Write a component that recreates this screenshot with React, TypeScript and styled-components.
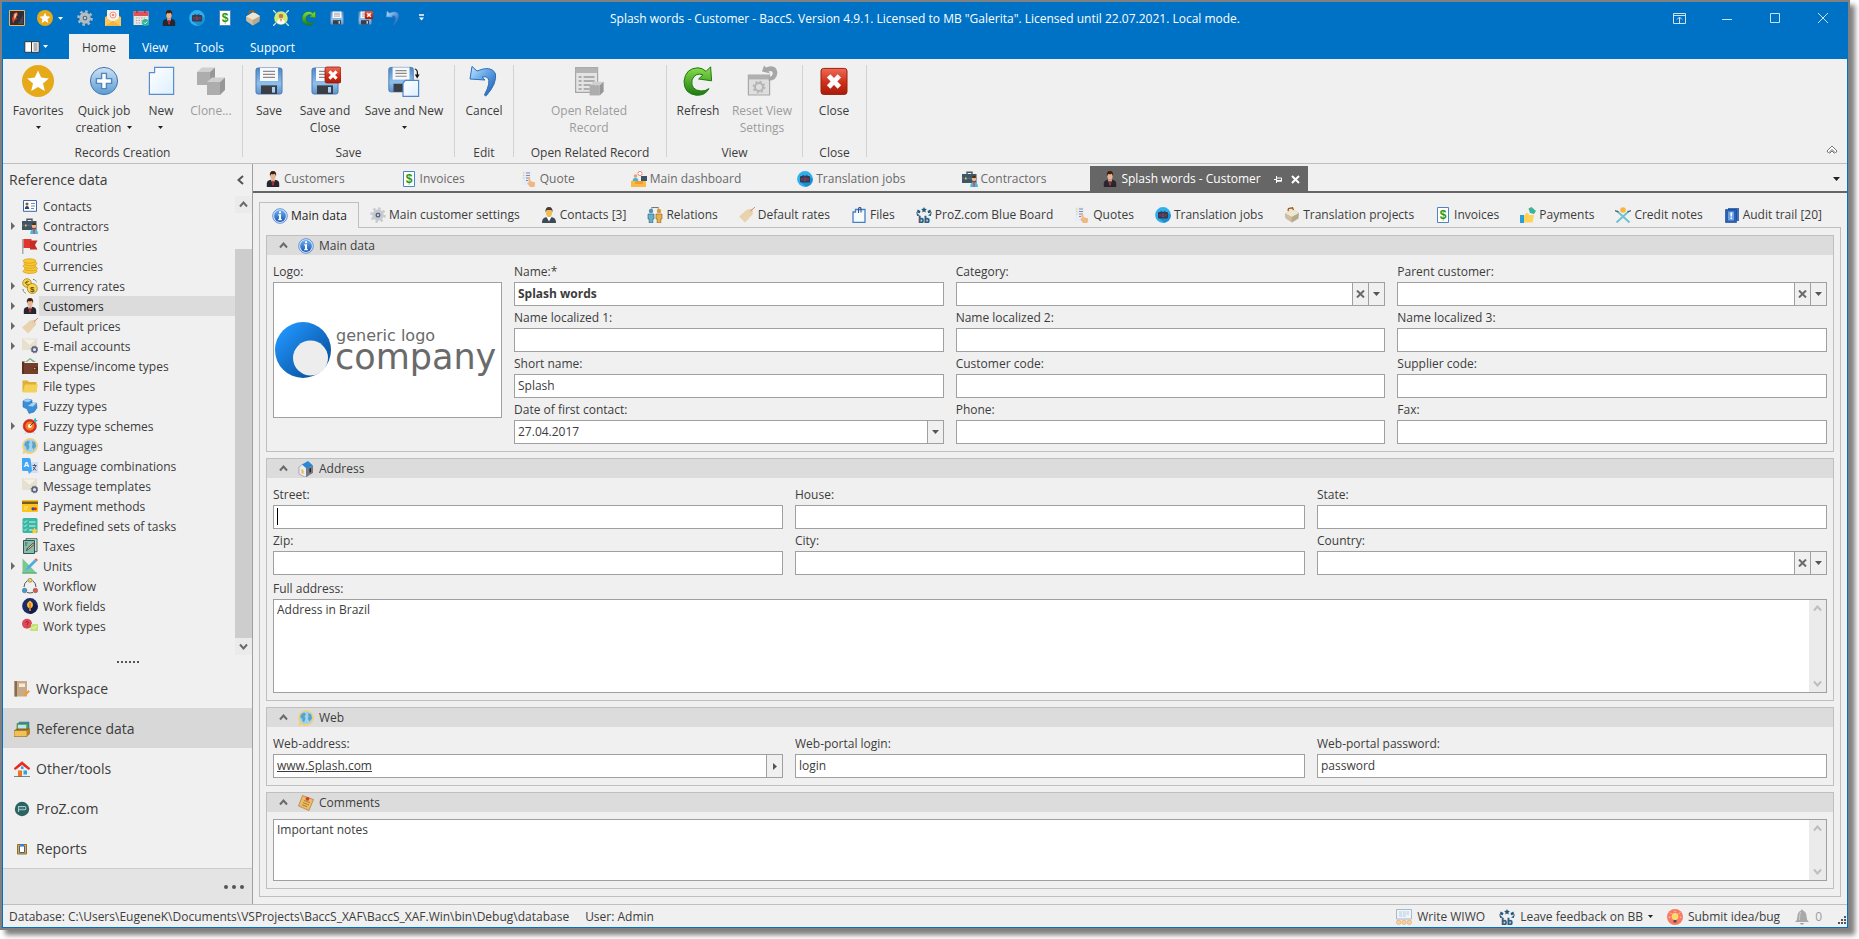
import React, { useState } from 'react';
import styled, { createGlobalStyle, css } from 'styled-components';

const color = {
  accent: '#0072c6',
  face: '#f0f0f0',
  line: '#bfbfbf',
  fieldLine: '#a0a0a0',
  text: '#3c3c3c',
  muted: '#9c9c9c',
  selected: '#dcdcdc',
  dark: '#666666',
};

const GlobalStyle = createGlobalStyle`
  *, *::before, *::after { box-sizing: border-box; }
  body {
    margin: 0;
    background: #ffffff;
    color: ${color.text};
    font: 12px/16px "Open Sans", "Noto Sans", sans-serif;
  }
  button, input, select, textarea { font: inherit; color: inherit; }
  button { background: none; border: 0; padding: 0; margin: 0; }
  ul { list-style: none; margin: 0; padding: 0; }
`;

/* ---------- icons ---------- */

const Gradients = styled.svg`
  position: absolute;
  width: 0;
  height: 0;
`;

const IconDefs = () => (
  <Gradients aria-hidden="true">
    <defs>
      <linearGradient id="gDisk" x1="0" y1="0" x2="0" y2="1">
        <stop offset="0" stopColor="#4d86c4" /><stop offset=".6" stopColor="#8fc0ea" /><stop offset="1" stopColor="#5c94cf" />
      </linearGradient>
      <linearGradient id="gBlue" x1="0" y1="0" x2="1" y2="1">
        <stop offset="0" stopColor="#c4e4ff" /><stop offset=".4" stopColor="#6cabe8" /><stop offset="1" stopColor="#1656ad" />
      </linearGradient>
      <linearGradient id="gPlus" x1="0" y1="0" x2="0" y2="1">
        <stop offset="0" stopColor="#cfe2f3" /><stop offset="1" stopColor="#5a9bd0" />
      </linearGradient>
      <linearGradient id="gPage" x1="0" y1="0" x2="1" y2="1">
        <stop offset="0" stopColor="#ffffff" /><stop offset="1" stopColor="#dcefff" />
      </linearGradient>
      <linearGradient id="gGreen" x1="0" y1="0" x2="0" y2="1">
        <stop offset="0" stopColor="#8be04a" /><stop offset="1" stopColor="#1d7a12" />
      </linearGradient>
      <linearGradient id="gRed" x1="0" y1="0" x2="0" y2="1">
        <stop offset="0" stopColor="#ee6a55" /><stop offset=".55" stopColor="#d02e18" /><stop offset="1" stopColor="#a81c0a" />
      </linearGradient>
      <linearGradient id="gInfo" x1="0" y1="0" x2="0" y2="1">
        <stop offset="0" stopColor="#6ab0f0" /><stop offset="1" stopColor="#1a55b4" />
      </linearGradient>
      <linearGradient id="gLogo" x1="0" y1="0" x2="1" y2="1">
        <stop offset=".1" stopColor="#2196ff" /><stop offset=".85" stopColor="#08529e" />
      </linearGradient>
    </defs>
  </Gradients>
);

const disk = (
  <>
    <path d="M1.500 2.500q0-1 1-1h11q1 0 1 1v11q0 1-1 1h-11q-1 0-1-1z" fill="url(#gDisk)" stroke="#4a7cb5" strokeWidth=".5" />
    <path d="M3.500 1.500h9V8h-9z" fill="#f6f8fb" />
    <path d="M5 3.200h6M5 4.700h6M5 6.200h6" stroke="#8a8a8a" strokeWidth=".6" />
    <path d="M4 10.200h8v4.300H4z" fill="#3b3f45" />
    <path d="M9.500 11h1.500v2.800H9.500z" fill="#a9d0f5" />
  </>
);

const personHead = (
  <>
    <ellipse cx="8" cy="5" rx="2.700" ry="3.500" fill="#e9b48c" />
    <path d="M5 5.500Q4 0 8 0t3 5.500q-.5-2-1.200-2.700Q8 3.800 6.200 3 5.300 4 5 5.500z" fill="#3d2010" />
  </>
);

const globe = (
  <>
    <path d="M8 0a8 8 0 1 1-4 15L.5 16 1.300 12A8 8 0 0 1 8 0z" fill="#f3cf7e" />
    <circle cx="8" cy="7.800" r="6.300" fill="#9cd3ef" />
    <path d="M3 4.500 6 2.500 8 4 6.500 6.500l1 2-1.500 4Q4 11.500 4.300 9L2.200 7zM10 3l3.200 1.500.8 4-2.500 3L10 9l.5-2.500z" fill="#5ba3c6" />
  </>
);

const mailGear = (
  <>
    <path d="M0 1h15v11H0z" fill="#e6e0d0" />
    <path d="M0 1h15L7.500 7.500z" fill="#f4f0e4" stroke="#d8d1bf" strokeWidth=".5" />
    <circle cx="12.500" cy="11.500" r="2.400" fill="none" stroke="#5c6485" strokeWidth="1.600" />
    <circle cx="12.500" cy="11.500" r="3.400" fill="none" stroke="#5c6485" strokeWidth=".9" strokeDasharray="1.300 1.370" />
  </>
);

const gear = (body: string, hub: string) => (
  <>
    <circle cx="8" cy="8" r="6.600" fill="none" stroke={body} strokeWidth="2.400" strokeDasharray="2.500 2.680" />
    <circle cx="8" cy="8" r="4.200" fill="#e6eaee" stroke={body} strokeWidth="3" />
    <circle cx="8" cy="8" r="1.800" fill="#dfe4e8" stroke={hub} strokeWidth="1.500" />
  </>
);

const briefcase = (
  <>
    <path d="M5 3V1.200h5V3" fill="none" stroke="#4a5560" strokeWidth="1.400" />
    <path d="M0 3h14.500v9H0z" fill="#3f5564" />
    <path d="M0 7.300h14.500" stroke="#62798a" strokeWidth=".8" />
    <path d="M3 6.500h1.500v2H3z" fill="#f0c649" />
    <circle cx="12" cy="8" r="2.200" fill="#f0b58b" />
    <path d="M10 7q0-2.200 2-2.200T14 7z" fill="#502c16" />
    <path d="M8.200 16q0-5 3.800-5t4 5z" fill="#48b9de" />
    <path d="M11 11h2l-.5 5h-1z" fill="#e64040" />
  </>
);

const transJob = (
  <>
    <circle cx="8" cy="8" r="7.900" fill="#2fb0ee" />
    <path d="M9 15.800A8 8 0 0 0 15.900 8L12 5 4 11.500z" fill="#1c8fd0" />
    <rect x="3" y="5" width="10" height="6.500" rx="1" fill="#343c55" />
    <path d="M5.500 4.200 8 5.500l2.500-1.300" stroke="#343c55" fill="none" />
    <path d="M5 7v2.500M7 7h2v2.500H7zM11 7v2.500" stroke="#a5405a" fill="none" strokeWidth=".8" />
  </>
);

const invoice = (
  <>
    <path d="M2.500.5h11v15h-11z" fill="#fff" stroke="#4d84c4" />
    <text x="8" y="12.200" textAnchor="middle" fontSize="12" fontWeight="700" fill="#2c9a10" fontFamily="Liberation Sans, sans-serif">$</text>
  </>
);

const tag = (
  <>
    <path d="M0 9.500 8 2.500l5.500-.8L14 7l-8 8.500z" fill="#e8d3ae" />
    <circle cx="11.700" cy="4.200" r="1.100" fill="#f7f2ea" stroke="#c9ad80" strokeWidth=".5" />
    <path d="M11.700 4 16 0" stroke="#e2705c" strokeWidth=".9" />
  </>
);

const bb = (
  <>
    <path d="m8 0 .9 1.800 2 .2-1.500 1.400.4 2L8 4.500l-1.800.9.4-2L5.100 2l2-.2zM1.500 2.500l3 1.500-.7 2.300L1 5.500zM14.500 2.500l-3 1.500.7 2.300L15 5.500zM0 4.500 2 7l2 1.500L1.200 9zM16 4.500 14 7l-2 1.500 2.800.5z" fill="#24587c" />
    <text x="8" y="15.700" textAnchor="middle" fontSize="9" fontWeight="700" stroke="#24587c" strokeWidth=".4" fill="#24587c" fontFamily="Open Sans, sans-serif">bb</text>
  </>
);

const quote = (
  <>
    <path d="M1 0h9v14H1z" fill="#e6ecf8" />
    <path d="M5 2h4M5 4.500h4M5 7h4M5 9.500h2" stroke="#8089ad" strokeWidth="1.200" />
    <path d="M2 2h1.500M2 4.500h1.500M2 7h1.500" stroke="#e8d05a" strokeWidth="1.200" />
    <path d="M7 6.500q1.300-.8 1.800.8l1 3 4 1q1.200 2-.5 4.700H9L6 12l1.800-.5z" fill="#efb783" />
  </>
);

const project = (
  <>
    <path d="M1 6.500 8.500 2 15 6l-.5 5.500L8 15.500 1.500 11z" fill="#b7a98d" />
    <path d="M1 6.500 8.500 2 15 6 7.500 10z" fill="#efe6d0" />
    <path d="m1 6.500 6.500 3.500.5 5.500L1.500 11z" fill="#cdbf9f" />
    <path d="m4 4 .5-2.500 4-.7L9.500 3" fill="none" stroke="#a25a1e" strokeWidth="1.300" />
  </>
);

const undo = (
  <path d="M1 7 2 .7 4.500 3q7-3 9.200 1.200 1 4.800-4.500 11.100-.6.300-1-.3 3.500-6.500 1.600-8.700-1-.8-2.800-.2L8.500 7.500z" fill="url(#gBlue)" stroke="#2c6fbd" strokeWidth=".5" />
);

const redo = (
  <path d="M12 3.200 14.300.9l.5 7L8.300 7l2.200-2.100Q6.500 3.600 5 7.500q-.8 5 4.500 5.500 2 .2 4-1.200-2 3.700-6.500 3.300-6-.8-6-7Q1.800 1.500 8 1.400q2.300.1 4 1.800z" fill="url(#gGreen)" stroke="#1f7a14" strokeWidth=".5" />
);

const redCross = (
  <>
    <rect x="0" y="0" width="8" height="8" rx="1" fill="url(#gRed)" stroke="#9c1a0c" strokeWidth=".4" />
    <path d="m2.200 2.200 3.600 3.600m0-3.600L2.200 5.800" stroke="#fff" strokeWidth="1.500" />
  </>
);

const cube = (x: number, y: number) => (
  <g transform={`translate(${x} ${y})`}>
    <path d="m0 2.500 2.500-2.300H9L6.500 2.500z" fill="#cfcfcf" />
    <path d="M0 2.500h6.500V9H0z" fill="#adadad" />
    <path d="M6.500 2.500 9 .2v6.300L6.500 9z" fill="#979797" />
  </g>
);

const info = (
  <>
    <circle cx="8" cy="8" r="7.300" fill="#dcebfb" stroke="#3f7cc8" strokeWidth=".8" />
    <circle cx="8" cy="8" r="5.900" fill="url(#gInfo)" />
    <path d="M7 3.200h2v2H7zM6.200 6.300H9v4.600h.8v1.300H6.200v-1.300H7V7.600h-.8z" fill="#fff" />
  </>
);

const icons = {
  app: (
    <>
      <path d="M.5.5h15v15H.5z" fill="#2f2d35" stroke="#f5b060" />
      <path d="M4 13.500 3 9l2-6 3-1 1 3-2 2 1 2-2 1z" fill="#d8412c" />
      <path d="m5.500 4 2.500-1-1 4-2 2z" fill="#f6c9a0" />
      <path d="M9 14 14 5v9z" fill="#47464f" />
    </>
  ),
  star: (
    <>
      <circle cx="8" cy="8" r="8" fill="#e5a91a" />
      <path d="m8 2.800 1.600 3.500 3.800.4-2.900 2.500.9 3.800L8 11l-3.400 2 .9-3.800-2.900-2.500 3.800-.4z" fill="#fff" />
    </>
  ),
  gear: gear('#b4bcc2', '#56748c'),
  gearLight: gear('#c6cacd', '#5c6485'),
  mail: (
    <>
      <path d="m0 7 8-5 8 5v9H0z" fill="#e8a93c" />
      <path d="M2 0h12v11H2z" fill="#f5f0ea" />
      <circle cx="8" cy="5" r="3" fill="none" stroke="#f08a80" strokeWidth=".9" />
      <circle cx="8" cy="5" r="1.100" fill="#ef6a60" />
      <path d="m0 7 8 5 8-5v9H0z" fill="#fbc95c" />
      <path d="m0 16 8-5 8 5z" fill="#f2b544" />
    </>
  ),
  calendar: (
    <>
      <path d="M.5 1.500h15V15H.5z" fill="#e9e6e0" />
      <path d="M.5 1.500h15V6H.5z" fill="#e0525a" />
      <path d="M4 0v3M12 0v3" stroke="#8d3038" strokeWidth="1.200" />
      <path d="M3 8h10M3 10.500h10M3 13h6" stroke="#a8a8a8" strokeWidth="1.200" strokeDasharray="1.400 1.200" />
      <circle cx="12.500" cy="12.500" r="3.500" fill="#2eb398" />
      <path d="m11 12.500 1.200 1.200 2-2.200" fill="none" stroke="#fff" />
    </>
  ),
  person: (
    <>
      <path d="M1.800 16v-4q.2-2.500 3-3L8 8.500l3.200.5q2.800.5 3 3v4z" fill="#26262c" />
      <path d="M6 8.500h4L8 14.500z" fill="#ececf2" />
      <path d="m7.300 9.500h1.400l.5 3L8 15l-1.200-2.500z" fill="#b8252d" />
      {personHead}
    </>
  ),
  contactPerson: (
    <>
      <path d="M1 16q-.2-4.500 3-5.500l4-1 4 1q3.200 1 3 5.500z" fill="#3c4a58" />
      <path d="M5.500 10h5L8 14.500z" fill="#fff" />
      <ellipse cx="8" cy="5.800" rx="3" ry="4" fill="#f3ba50" />
      <path d="M4.500 5.500Q4 0 8 0t3.500 5.500Q11 3.200 10 3H6q-1 .5-1.500 2.500z" fill="#4a3a34" />
    </>
  ),
  relations: (
    <>
      <circle cx="4" cy="4" r="2.200" fill="#4a93b2" /><circle cx="12" cy="4" r="2.200" fill="#d69a38" />
      <path d="M1 7h6v5H5.800v4H2.200v-4H1z" fill="#64b1cb" stroke="#2c5b70" strokeWidth=".6" />
      <path d="M9 7h6v5h-1.200v4h-3.600v-4H9z" fill="#e7b04c" stroke="#8a5a18" strokeWidth=".6" />
      <path d="M4 1q4-1.500 8 0" fill="none" stroke="#444" strokeWidth=".8" />
    </>
  ),
  transJob,
  invoice,
  project,
  quote,
  tag,
  bb,
  info,
  undo,
  redo,
  globe,
  mailGear,
  briefcase,
  save: disk,
  saveClose: (<>{disk}<g transform="translate(8 1)">{redCross}</g></>),
  saveNew: (
    <>
      <g transform="translate(-1 -.2) scale(.94)">{disk}</g>
      <path d="M8.700 7.700h6.600v8H7.500V9z" fill="url(#gPage)" stroke="#4f86c6" strokeWidth=".6" />
      <path d="M13.400 2q1.300.2 1.300 2v1.500" fill="none" stroke="#111" strokeWidth=".6" />
      <path d="M13.400 4.700h2.400l-1.200 2z" fill="#111" />
    </>
  ),
  userBadge: (
    <>
      <path d="m0 0 3 3M16 0l-3 3M0 16l3-3M16 16l-3-3" stroke="#c8dfef" strokeWidth="1.300" />
      <circle cx="8" cy="8" r="6.800" fill="#d3ea7a" />
      <circle cx="8" cy="6" r="2.300" fill="#c07a4e" />
      <path d="M4 12.500q.5-3.500 4-3.500t4 3.500Q8 16 4 12.500z" fill="#fff" />
      <path d="M7.300 9h1.400L8 12.500z" fill="#d8433c" />
    </>
  ),
  plus: (
    <>
      <circle cx="8" cy="8" r="6.800" fill="url(#gPlus)" stroke="#3f78b8" strokeWidth=".5" />
      <path d="M6.800 4.200h2.400v2.600h2.600v2.400H9.200v2.600H6.800V9.200H4.200V6.800h2.600z" fill="#fff" stroke="#4e86c2" strokeWidth=".7" />
    </>
  ),
  page: (
    <path d="M4.800 1.200h9.500v13.500H2.200V3.800h2.600z" fill="url(#gPage)" stroke="#5a8ecb" strokeWidth=".6" />
  ),
  clone: (<>{cube(1, 1)}{cube(6, 6)}</>),
  related: (
    <>
      <path d="M1.300 1.300h11v12.400h-11z" fill="#e4e4e4" stroke="#a6a6a6" strokeWidth=".6" />
      <path d="M1.300 1.300h11V4h-11z" fill="#b4b4b4" />
      <path d="M2.800 6h1.500m1 0h5.500M2.800 8h1.500m1 0h5.500M2.800 10h1.500m1 0h5.500M2.800 12h1.500m1 0h3" stroke="#9a9a9a" strokeWidth=".7" />
      <g transform="translate(8.300 8.200) scale(.78)">{cube(0, 0)}</g>
    </>
  ),
  resetView: (
    <>
      <path d="M1.200 5h10.600v10H1.200z" fill="#dedede" stroke="#a8a8a8" strokeWidth=".6" />
      <path d="M1.200 5h10.600v2.200H1.200z" fill="#b0b0b0" />
      <circle cx="6.500" cy="11" r="2" fill="none" stroke="#b4b4b4" />
      <circle cx="6.500" cy="11" r="2.800" fill="none" stroke="#b4b4b4" strokeWidth=".8" strokeDasharray="1 1.200" />
      <path d="M8 3.300 9 .3l1 1q5-2 5.700 2.400-.2 4-4.500 4.200l.2-1.700q2-.5 2-2.200-.4-1.500-2.200-.7l1 1z" fill="#a6a6a6" />
    </>
  ),
  close: (
    <>
      <rect x="1.500" y="1.700" width="13" height="13" rx="1.300" fill="url(#gRed)" stroke="#98200f" strokeWidth=".5" />
      <path d="m5.300 5.400 5.400 5.600m0-5.600L5.300 11" stroke="#fff" strokeWidth="2.400" />
    </>
  ),
  dashboard: (
    <>
      <path d="M0 10h15v6H0z" fill="#fbb844" />
      <path d="M4 10v3h8v-3z" fill="#f19d2a" />
      <circle cx="4.500" cy="5" r="1.800" fill="#e9a36b" />
      <path d="M1.500 10q.5-3.300 3-3.300t3 3.300z" fill="#4bb3dc" />
      <path d="M10 5h6v5h-6z" fill="#3d5269" />
      <circle cx="9" cy="2.500" r="2.100" fill="#fff" stroke="#e86f64" strokeWidth=".8" />
    </>
  ),
  file: (
    <>
      <path d="M4.500 2.500H14v13H2V5h2.500z" fill="#f5faff" stroke="#4680c4" strokeWidth="1.300" />
      <path d="M7.500 6V2q0-1.500 1.200-1.500T10 2v3.500" fill="none" stroke="#2a4f86" strokeWidth="1.100" />
    </>
  ),
  payments: (
    <>
      <path d="M0 8h4v8H0z" fill="#2a9fd8" />
      <path d="M4 9q2-4 4-3l1 2h5l-1.500 7.500H4z" fill="#ffd25c" />
      <path d="m8.500 1.500 3-1.500L16 4l-2 3-4-1z" fill="#3bb497" />
    </>
  ),
  creditNotes: (
    <>
      <path d="M1.500 15.500 14 4M14.500 15.500 2 4" stroke="#6fc3d0" strokeWidth="2" />
      <path d="M0 3.500 3.500 5M16 3.500 12.500 5" stroke="#4d5a66" strokeWidth="1.200" />
      <circle cx="8" cy="3" r="2.800" fill="#fcb53c" />
    </>
  ),
  audit: (
    <>
      <path d="M4 1h11v13h-2L4 3z" fill="#3c6fb8" />
      <path d="M1.500 2.500h11v13h-11z" fill="#2760b4" stroke="#183f80" strokeWidth=".6" />
      <path d="M4 4.500h6v9H4z" fill="#6da3e2" />
      <path d="M6.300 5.500h2L8 9.500H6.700zM6.500 10.500H8V12H6.500z" fill="#fff" />
    </>
  ),
  house3d: (
    <>
      <path d="m1 6 4-3 5 4v8l-3 1-6-3z" fill="#ececf0" stroke="#777" strokeWidth=".5" />
      <path d="m8 7 7-2.500V12l-7 4z" fill="#777a84" />
      <path d="M4 3.500 10 0l5 4.500-6.500 3z" fill="#2a86d6" />
      <path d="m3.500 8 2 1v4l-2-1z" fill="#e8b93c" />
      <path d="m11.500 7.500 1.500-.5v4l-1.500.8z" fill="#222" />
    </>
  ),
  note: (
    <>
      <path d="m4.500.5 11 4-4.500 11L.5 11z" fill="#ecbc66" stroke="#a66c28" strokeWidth=".6" />
      <path d="m6 5.500 6 2.200M5 7.700l6 2.200M4.200 9.900l5 1.800" stroke="#8d5f28" strokeWidth=".7" />
      <circle cx="9.500" cy="3.800" r="1.900" fill="#d13a2c" />
    </>
  ),
  idCard: (
    <>
      <path d="M1.500 2.500h13v10.800h-13z" fill="#fff" stroke="#3b66a8" />
      <circle cx="5" cy="6" r="1.500" fill="#8b5a34" />
      <path d="M2.800 11q.3-3 2.200-3t2.200 3z" fill="#2f3f66" />
      <path d="M9 5.500h4M9 8h4M9 10.500h3" stroke="#5b7fb8" strokeWidth=".9" />
    </>
  ),
  flag: (
    <>
      <path d="M.8 1v15" stroke="#9aa2a8" strokeWidth="1.300" />
      <path d="M1.500 1h8v9h-8z" fill="#e0342c" />
      <path d="M8 2.500h7.500L13 7l2.500 4.500H8z" fill="#c42c24" />
    </>
  ),
  coins: (
    <g fill="#f6c835" stroke="#d79c16" strokeWidth=".7">
      <ellipse cx="8" cy="13.200" rx="7" ry="2.300" /><ellipse cx="9" cy="10.500" rx="6.500" ry="2.200" />
      <ellipse cx="7.500" cy="8" rx="6.500" ry="2.200" /><ellipse cx="8.500" cy="5.500" rx="6.500" ry="2.200" />
      <ellipse cx="7.500" cy="3" rx="6.500" ry="2.200" />
    </g>
  ),
  rates: (
    <>
      <circle cx="5" cy="5" r="4.300" fill="#f8d648" stroke="#94701c" strokeWidth=".7" />
      <circle cx="10.300" cy="10.500" r="5" fill="#f8d648" stroke="#94701c" strokeWidth=".7" />
      <text x="10.300" y="13.500" textAnchor="middle" fontSize="8" fontWeight="700" fill="#6a4a10" fontFamily="Liberation Sans, sans-serif">$</text>
      <path d="M6.800 3.500Q5 2.500 4 4q-.8 2 .8 2.800 1.200.3 2-.5M2.800 4.700h3" fill="none" stroke="#6a4a10" strokeWidth=".8" />
      <path d="M11 1.500q3 0 3.500 3M1 11q.2 3.500 3 4.200" fill="none" stroke="#555" strokeWidth=".9" strokeDasharray="1.600 .8" />
    </>
  ),
  wallet: (
    <>
      <path d="m3 4 5-4 6 4z" fill="#7fae86" />
      <path d="m5 4 3-2.500L11 4z" fill="#e5efe2" />
      <path d="M0 3.500 2 5h14v11H0z" fill="#74402c" />
      <path d="M0 3.500h3L2 5v11H0z" fill="#5c2f1f" />
      <path d="M11 9h5v3h-5z" fill="#5c2f1f" /><circle cx="12.700" cy="10.500" r=".8" fill="#e8c15c" />
    </>
  ),
  folder: (
    <>
      <path d="M.5 2.500h5L7 4h7.500v10H.5z" fill="#dfb036" />
      <path d="m3 6.500h13L14 14.500H.8z" fill="#f5d257" />
    </>
  ),
  fuzzy: (
    <>
      <path d="m1 3 4-2 5 1v3h4.500l.5 5-3 4-5 1.500-2-4.500-4-2z" fill="#3b8fd8" stroke="#1f62aa" strokeWidth=".5" />
      <path d="m1 3 4-2 5 1-4 2zM6 8l4-3h4.500L11 8.500z" fill="#a5d6f8" />
    </>
  ),
  target: (
    <>
      <circle cx="7.800" cy="8" r="6.600" fill="#fff" stroke="#8e1410" strokeWidth=".6" />
      <circle cx="7.800" cy="8" r="5.600" fill="#f07c28" stroke="#d9281a" strokeWidth="2" />
      <circle cx="7.800" cy="8" r="2" fill="#fff3d0" />
      <path d="m8 8 5-5" stroke="#333" strokeWidth=".8" /><path d="m12 1 2-1v2h2l-2 2h-2z" fill="#3ab5c8" />
      <path d="m3 16 1.500-2M13 16l-1.500-2" stroke="#ccc" />
    </>
  ),
  langCombo: (
    <>
      <path d="M8 4h8v11H9z" fill="#d4def2" />
      <path d="M0 0h7q1.500 0 1.700 1.500L10 13l-3 3-1-3H1.500Q0 13 0 11.500z" fill="#42a5f5" />
      <text x="4.500" y="9" textAnchor="middle" fontSize="8" fontWeight="700" fill="#fff" fontFamily="Liberation Sans, sans-serif">A</text>
      <path d="M10.500 7.500h4M12.500 6.200v1.300M11 12.500l3-5M11.200 9l3 3.500" stroke="#3e4a66" strokeWidth=".9" fill="none" />
    </>
  ),
  card: (
    <>
      <path d="M0 2h16v12H0z" fill="#fbc51e" />
      <path d="M0 3.500h16V6H0z" fill="#7a5c2c" />
      <path d="M2 9h4M2 11h3" stroke="#fff2bf" strokeWidth=".8" />
      <circle cx="11" cy="10.800" r="1.600" fill="#1b4fc0" /><circle cx="13.300" cy="10.800" r="1.600" fill="#d8321c" />
    </>
  ),
  checklist: (
    <>
      <rect x=".5" y="0" width="15" height="15" rx="1.500" fill="#38b8a4" />
      <path d="m2 3.500 1 1L5 2.500M2 7.500l1 1 2-2M2 11.500l1 1 2-2M7 4h6.500M7 8h6.500M7 12h3" fill="none" stroke="#e4fbf6" strokeWidth=".9" />
      <path d="m12.500 9.500 1.200 2 2.300.3-1.700 1.600.4 2.400-2.200-1.100-2.200 1.100.4-2.400L9 11.800l2.300-.3z" fill="#fbcf45" />
    </>
  ),
  taxes: (
    <>
      <path d="M4 .7h11v13H4z" fill="#c9e2da" stroke="#39524c" strokeWidth=".9" />
      <path d="M1.500 2.500h11v13h-11z" fill="#85bdae" stroke="#2d4640" strokeWidth=".9" />
      <path d="M3 5h2.500M3 7h2" stroke="#2d4640" strokeWidth=".8" />
      <path d="m4.500 12.500 1-2.500 6-5 1 1.200-6 5z" fill="#f2d6a0" stroke="#332a20" strokeWidth=".8" />
    </>
  ),
  ruler: (
    <>
      <path d="M.5.5 15 15.500H.5zM4 9v3h3z" fill="#7ac792" fillRule="evenodd" />
      <path d="M0 15h15" stroke="#53a870" />
      <path d="m4.500 9.500 8-8 2 2-8 8-3 1z" fill="#4aaede" />
      <path d="m12.500 1.500 1.500-1.300L16 2l-1.500 1.500z" fill="#e8605a" />
    </>
  ),
  workflow: (
    <>
      <path d="M5.500 2.500Q2 5 2 9M10.500 2.500Q14 5 14 9M5 14.500q3 1 6 0" fill="none" stroke="#555" strokeWidth="1" />
      <circle cx="8" cy="2.300" r="2" fill="#f7d04a" stroke="#555" strokeWidth=".5" />
      <circle cx="2.600" cy="12.500" r="2.300" fill="#35a0e0" stroke="#555" strokeWidth=".5" />
      <circle cx="13.400" cy="12.500" r="2.300" fill="#e8554e" stroke="#555" strokeWidth=".5" />
    </>
  ),
  workFields: (
    <>
      <circle cx="8" cy="8" r="7.900" fill="#1c2a66" />
      <path d="M8 16a8 8 0 0 0 7.900-8L11 4 6.500 12z" fill="#111b4c" />
      <path d="M8 2.500q3 2 3 4.500 0 1.800-1.700 3H6.700Q5 8.800 5 7q0-2.500 3-4.500z" fill="#fcb93a" />
      <path d="M7 10h2v3H7z" fill="#c07a24" /><path d="M8 5v5" stroke="#c55a1c" />
    </>
  ),
  workTypes: (
    <>
      <circle cx="5" cy="5.800" r="5" fill="#df4a58" />
      <path d="M3.800 4.500q.3-1.300 1.500-1.200 1.500.5.800 1.800L5.200 6v1M5.200 8v.8" fill="none" stroke="#8f1d2c" strokeWidth=".9" />
      <path d="M9 6h7v7H9l-2-1.500 2-1z" fill="#c2e27a" />
      <path d="m10.500 9.300 1.300 1.300 2.400-2.600" fill="none" stroke="#f5ffe0" />
    </>
  ),
  notebook: (
    <>
      <path d="M.5 0H13v15.500H.5z" fill="#c9aa86" />
      <path d="M.5 0H3v15.500H.5z" fill="#8b6b4e" />
      <path d="M5 2.500h6V6H5z" fill="#f5ecdd" />
      <path d="m10 15 .5-2.500 4-3.500L16 10.500l-4 4z" fill="#f09a3a" />
    </>
  ),
  drawer: (
    <>
      <path d="M5 1h10v7H5z" fill="#4f9ad4" stroke="#246" strokeWidth=".4" />
      <path d="M3 2.500h11V9H3z" fill="#5cb85c" stroke="#2c5e2c" strokeWidth=".5" />
      <path d="M4 4h8v4H4z" fill="#bce3f7" />
      <path d="m0 9.500 3-2h13l-2 2z" fill="#96621c" />
      <path d="M0 9.500h13v6H0z" fill="#f0c256" stroke="#8e5e1c" strokeWidth=".6" />
      <path d="m13 9.500 3-2v5.500l-3 2.500z" fill="#b5802a" />
    </>
  ),
  home: (
    <>
      <path d="M3 8h10.500v7.500H3z" fill="#e8eef2" />
      <path d="m0 7.500 8-6.800 8 6.800-1.500 1L8 3.500 1.500 8.500z" fill="#e8281c" stroke="#e8281c" strokeWidth=".8" />
      <path d="M4 9.500h4v6H4z" fill="#f0761c" />
      <path d="M9.500 9.500h3.500v4H9.500zM7 5.500h2.500V8H7z" fill="#28a4e8" />
      <path d="M0 15.600h16" stroke="#555" strokeWidth=".8" />
    </>
  ),
  proz: (
    <>
      <circle cx="8" cy="8" r="7.200" fill="#2b6363" />
      <path d="M4.500 11V5.500h6.300q1 0 1 1v1.200q0 1-1 1H4.500" fill="none" stroke="#a8cccc" strokeWidth="1.100" />
      <path d="M4 7h6" stroke="#78a8a8" strokeWidth=".6" />
    </>
  ),
  report: (
    <>
      <path d="M3.500 3.500h9v9.500h-9z" fill="#e0ab35" stroke="#9b6f14" />
      <path d="M5.500 5h5v6.500h-5z" fill="#fff" stroke="#2f66c0" />
      <path d="M6 3h4v2H6z" fill="#3a7be0" />
    </>
  ),
  wiwo: (
    <>
      <path d="M.5.5h15v9.500H.5z" fill="#eef4f8" stroke="#a8bac8" />
      <path d="M3 3h10M3 5h10M3 7h7" stroke="#a9c4d8" strokeWidth=".8" strokeDasharray="3 .8" />
      <g fill="#fad0a0" stroke="#e0a468" strokeWidth=".6">
        <circle cx="2.700" cy="13.300" r="2.200" /><circle cx="8" cy="13.300" r="2.200" /><circle cx="13.300" cy="13.300" r="2.200" />
      </g>
    </>
  ),
  idea: (
    <>
      <circle cx="8" cy="8" r="8" fill="#f97a62" />
      <path d="M8 1.800v1.400M3.200 3.800l1 1M12.800 3.800l-1 1M1.800 8.200h1.400M12.800 8.200h1.400" stroke="#fff" strokeWidth=".8" />
      <circle cx="8" cy="7.500" r="3.400" fill="#fcdb6e" />
      <path d="M6.500 11h3v2.500h-3z" fill="#4a4f60" />
    </>
  ),
  bell: (
    <>
      <path d="M8 .5q1 0 1.200 1.200Q12.500 3 12.500 7q0 4 2.500 6H1q2.500-2 2.500-6 0-4 3.300-5.300Q7 .5 8 .5z" fill="#a9a9a9" />
      <path d="M6.500 3q-1 2-1 8" stroke="#cfcfcf" fill="none" /><path d="M6 14h4q-.5 1.700-2 1.700T6 14z" fill="#9c9c9c" />
    </>
  ),
  appMenu: (
    <>
      <path d="M.8 2.700h14.400v10.600H.8z" fill="#fff" stroke="#333" strokeWidth="1" />
      <path d="M7.500 2.700v10.600" stroke="#333" />
      <path d="M9.500 5h4M9.500 7h4M9.500 9h4M9.500 11h4" stroke="#555" strokeWidth=".9" />
    </>
  ),
};

type IconName = keyof typeof icons;

const IconSvg = styled.svg<{ $size: number }>`
  width: ${(p) => p.$size}px;
  height: ${(p) => p.$size}px;
  flex: none;
  display: block;
`;

const Icon = ({ name, size = 16 }: { name: IconName; size?: number }) => (
  <IconSvg $size={size} viewBox="0 0 16 16" aria-hidden="true">{icons[name]}</IconSvg>
);

const Glyph = styled.svg<{ $w: number; $h: number }>`
  width: ${(p) => p.$w}px;
  height: ${(p) => p.$h}px;
  flex: none;
  display: block;
`;

const Caret = ({ fill = '#222' }: { fill?: string }) => (
  <Glyph $w={5} $h={3} viewBox="0 0 5 3" aria-hidden="true"><path d="M0 0h5L2.500 3z" fill={fill} /></Glyph>
);

const Chevron = ({ up, stroke = '#6a6a6a' }: { up?: boolean; stroke?: string }) => (
  <Glyph $w={9} $h={7} viewBox="0 0 9 7" aria-hidden="true">
    <path d={up ? 'm1 5.500 3.500-4 3.500 4' : 'm1 1.500 3.500 4 3.500-4'} fill="none" stroke={stroke} strokeWidth="2" />
  </Glyph>
);

/* ---------- window frame ---------- */

const Frame = styled.div`
  margin: 0 9px 9px 0;
  min-height: calc(100vh - 9px);
  border: 2px solid #808080;
  box-shadow: 5px 5px 5px rgba(0, 0, 0, 0.5);
  display: flex;
`;

const Window = styled.div`
  flex: 1;
  min-width: 0;
  display: flex;
  flex-direction: column;
  border: 1px solid ${color.accent};
  border-top: 0;
  background: ${color.face};
`;

const TitleBar = styled.header`
  display: grid;
  grid-template-columns: 1fr auto 1fr;
  align-items: center;
  height: 32px;
  background: ${color.accent};
  color: #ffffff;
`;

const QuickAccess = styled.div`
  display: flex;
  align-items: center;
  padding-left: 6px;
`;

const QuickButton = styled.button<{ $wide?: boolean }>`
  width: 28px;
  height: 24px;
  display: flex;
  align-items: center;
  gap: 5px;
  ${(p) => p.$wide && css`width: 40px;`}
`;

const WindowTitle = styled.h1`
  margin: 0;
  padding-top: 2px;
  font-size: 12px;
  font-weight: 400;
  white-space: nowrap;
`;

const WindowControls = styled.div`
  display: flex;
  justify-content: flex-end;
`;

const WindowButton = styled.button`
  width: 48px;
  height: 32px;
  display: grid;
  place-items: center;
`;

const RibbonTabs = styled.nav`
  display: flex;
  height: 25px;
  background: ${color.accent};
`;

const AppMenu = styled.button`
  width: 66px;
  display: flex;
  align-items: center;
  justify-content: center;
  gap: 3px;
`;

const RibbonTab = styled.button<{ $active?: boolean }>`
  padding: 3px 13px 0;
  color: ${(p) => (p.$active ? color.text : '#ffffff')};
  background: ${(p) => (p.$active ? color.face : 'transparent')};
`;

/* ---------- ribbon ---------- */

const Ribbon = styled.div`
  display: flex;
  height: 105px;
  border-bottom: 1px solid ${color.line};
`;

const RibbonGroup = styled.section<{ $w: number }>`
  width: ${(p) => p.$w}px;
  margin: 6px 0;
  display: flex;
  flex-direction: column;
  justify-content: space-between;
  border-right: 1px solid #d2d2d2;
`;

const RibbonItems = styled.div<{ $pad?: number }>`
  display: flex;
  padding-left: ${(p) => p.$pad ?? 0}px;
`;

const RibbonCaption = styled.div`
  text-align: center;
  line-height: 16px;
  height: 12px;
`;

const RibbonButton = styled.button<{ $w: number }>`
  width: ${(p) => p.$w}px;
  display: flex;
  flex-direction: column;
  align-items: center;
  gap: 5px;
  line-height: 17px;
  &:disabled { color: ${color.muted}; }
`;

const ButtonText = styled.span`
  display: flex;
  flex-direction: column;
  align-items: center;
  white-space: nowrap;
`;

const TextLine = styled.span`
  display: flex;
  align-items: center;
  justify-content: center;
  gap: 6px;
  height: 17px;
`;

const CollapseRibbon = styled.button`
  margin: auto 9px 8px auto;
`;

type Command = { icon: IconName; lines: string[]; w: number; menu?: 'inline' | 'below'; off?: boolean };
type CommandGroup = { title: string; w: number; pad?: number; items: Command[] };

const ribbon: CommandGroup[] = [
  { title: 'Records Creation', w: 240, pad: 7, items: [
    { icon: 'star', lines: ['Favorites'], w: 56, menu: 'below' },
    { icon: 'plus', lines: ['Quick job', 'creation'], w: 76, menu: 'inline' },
    { icon: 'page', lines: ['New'], w: 38, menu: 'below' },
    { icon: 'clone', lines: ['Clone...'], w: 62, off: true },
  ] },
  { title: 'Save', w: 212, items: [
    { icon: 'save', lines: ['Save'], w: 52 },
    { icon: 'saveClose', lines: ['Save and', 'Close'], w: 60 },
    { icon: 'saveNew', lines: ['Save and New'], w: 98, menu: 'below' },
  ] },
  { title: 'Edit', w: 59, items: [{ icon: 'undo', lines: ['Cancel'], w: 58 }] },
  { title: 'Open Related Record', w: 153, items: [{ icon: 'related', lines: ['Open Related', 'Record'], w: 150, off: true }] },
  { title: 'View', w: 136, items: [
    { icon: 'redo', lines: ['Refresh'], w: 62 },
    { icon: 'resetView', lines: ['Reset View', 'Settings'], w: 66, off: true },
  ] },
  { title: 'Close', w: 64, items: [{ icon: 'close', lines: ['Close'], w: 62 }] },
];

/* ---------- sidebar ---------- */

const Workspace = styled.div`
  flex: 1;
  display: flex;
  min-height: 0;
`;

const Sidebar = styled.aside`
  flex: none;
  width: 250px;
  display: flex;
  flex-direction: column;
  border-right: 1px solid ${color.fieldLine};
`;

const SidebarHeader = styled.div`
  height: 32px;
  padding: 0 8px 0 6px;
  display: flex;
  align-items: center;
  justify-content: space-between;
`;

const SidebarTitle = styled.h2`
  margin: 0;
  font-size: 14px;
  font-weight: 400;
`;

const TreeArea = styled.div`
  flex: 1;
  display: flex;
`;

const Tree = styled.ul`
  flex: 1;
`;

const TreeRow = styled.button`
  width: 100%;
  height: 20px;
  display: flex;
  align-items: center;
  text-align: left;
`;

const Expander = styled.span`
  width: 19px;
  padding-left: 8px;
`;

const TreeLabel = styled.span<{ $selected?: boolean }>`
  flex: 1;
  height: 20px;
  margin-left: 1px;
  padding-left: 4px;
  line-height: 22px;
  ${(p) => p.$selected && css`background: ${color.selected}; color: #1e1e1e;`}
`;

const ScrollTrack = styled.div`
  width: 17px;
  display: flex;
  flex-direction: column;
  background: #f0f0f0;
`;

const ScrollEnd = styled.button`
  height: 17px;
  display: grid;
  place-items: center;
  background: #ebebeb;
`;

const ScrollThumb = styled.div`
  flex: 1;
  margin-top: 36px;
  background: #cdcdcd;
`;

const Splitter = styled.div`
  height: 13px;
  display: grid;
  place-items: center;
`;

const NavItem = styled.button<{ $active?: boolean }>`
  width: 100%;
  height: 40px;
  padding: 2px 0 0 11px;
  display: flex;
  align-items: center;
  gap: 6px;
  font-size: 14px;
  background: ${(p) => (p.$active ? '#d8d8d8' : 'transparent')};
`;

const SidebarFooter = styled.div`
  height: 36px;
  padding-right: 8px;
  display: flex;
  align-items: center;
  justify-content: flex-end;
  background: #e4e4e4;
  border-top: 1px solid #cccccc;
`;

const tree: { icon: IconName; label: string; children?: boolean }[] = [
  { icon: 'idCard', label: 'Contacts' },
  { icon: 'briefcase', label: 'Contractors', children: true },
  { icon: 'flag', label: 'Countries' },
  { icon: 'coins', label: 'Currencies' },
  { icon: 'rates', label: 'Currency rates', children: true },
  { icon: 'person', label: 'Customers', children: true },
  { icon: 'tag', label: 'Default prices', children: true },
  { icon: 'mailGear', label: 'E-mail accounts', children: true },
  { icon: 'wallet', label: 'Expense/income types' },
  { icon: 'folder', label: 'File types' },
  { icon: 'fuzzy', label: 'Fuzzy types' },
  { icon: 'target', label: 'Fuzzy type schemes', children: true },
  { icon: 'globe', label: 'Languages' },
  { icon: 'langCombo', label: 'Language combinations' },
  { icon: 'mailGear', label: 'Message templates' },
  { icon: 'card', label: 'Payment methods' },
  { icon: 'checklist', label: 'Predefined sets of tasks' },
  { icon: 'taxes', label: 'Taxes' },
  { icon: 'ruler', label: 'Units', children: true },
  { icon: 'workflow', label: 'Workflow' },
  { icon: 'workFields', label: 'Work fields' },
  { icon: 'workTypes', label: 'Work types' },
];

const navItems: { icon: IconName; label: string }[] = [
  { icon: 'notebook', label: 'Workspace' },
  { icon: 'drawer', label: 'Reference data' },
  { icon: 'home', label: 'Other/tools' },
  { icon: 'proz', label: 'ProZ.com' },
  { icon: 'report', label: 'Reports' },
];

/* ---------- documents ---------- */

const Content = styled.main`
  flex: 1;
  min-width: 0;
  display: flex;
  flex-direction: column;
`;

const DocTabs = styled.div`
  display: flex;
  height: 29px;
  padding-top: 2px;
  border-bottom: 2px solid ${color.dark};
`;

const DocTab = styled.button<{ $active?: boolean }>`
  display: flex;
  align-items: center;
  gap: 3px;
  padding: 1px 44px 0 12px;
  white-space: nowrap;
  color: #6a6a6a;
  ${(p) => p.$active && css`
    color: #ffffff;
    background: ${color.dark};
    padding-right: 8px;
  `}
`;

const DocTabTools = styled.span`
  display: flex;
  align-items: center;
  gap: 9px;
  padding-left: 10px;
`;

const DocMenu = styled.button`
  margin-left: auto;
  width: 21px;
  display: grid;
  place-items: center;
`;

const Page = styled.div`
  flex: 1;
  display: flex;
  flex-direction: column;
  padding: 9px 6px 7px;
`;

const PageTabs = styled.div`
  display: flex;
  height: 25px;
`;

const PageTab = styled.button<{ $active?: boolean }>`
  display: flex;
  align-items: center;
  gap: 3px;
  padding: 1px 10px 0 11px;
  white-space: nowrap;
  ${(p) => p.$active && css`
    color: #1e1e1e;
    height: 26px;
    padding: 0 11px 0 12px;
    background: ${color.face};
    border: 1px solid ${color.line};
    border-bottom: 0;
  `}
`;

const PagePanel = styled.form`
  flex: 1;
  display: flex;
  flex-direction: column;
  gap: 6px;
  padding: 8px 6px 7px;
  border: 1px solid ${color.line};
  /* the active tab's face breaks the panel's top line */
  border-top: 0;
  background:
    linear-gradient(${color.face}, ${color.face}) 0 0 / 98px 1px no-repeat,
    linear-gradient(${color.line}, ${color.line}) 0 0 / 100% 1px no-repeat;
`;

const GroupBox = styled.section<{ $grow?: boolean }>`
  border: 1px solid ${color.line};
  ${(p) => p.$grow && css`
    flex: 1;
    display: flex;
    flex-direction: column;
  `}
`;

const GroupHeader = styled.button`
  width: 100%;
  height: 19px;
  padding-left: 12px;
  display: flex;
  align-items: center;
  background: ${color.selected};
`;

const GroupTitle = styled.span`
  display: flex;
  align-items: center;
  gap: 5px;
  margin-left: 10px;
`;

const GroupBody = styled.div`
  padding: 5px 6px 7px;
`;

const MainBody = styled(GroupBody)`
  display: grid;
  grid-template-columns: 229px 1fr;
  column-gap: 12px;
`;

const CommentsBody = styled(GroupBody)`
  flex: 1;
  display: flex;
  padding-top: 7px;
`;

const ThreeColumns = styled.div`
  display: grid;
  grid-template-columns: repeat(3, minmax(0, 1fr));
  column-gap: 12px;
`;

const FieldBlock = styled.div`
  display: flex;
  flex-direction: column;
`;

const FieldLabel = styled.label<{ $tall?: boolean }>`
  height: ${(p) => (p.$tall ? 24 : 22)}px;
  line-height: ${(p) => (p.$tall ? 28 : 24)}px;
`;

const box = css`
  background: #ffffff;
  border: 1px solid ${color.fieldLine};
`;

const FieldBox = styled.div`
  ${box}
  height: 24px;
  display: flex;
`;

const fieldText = css`
  flex: 1;
  min-width: 0;
  padding: 0 3px;
  border: 0;
  outline: 0;
  background: transparent;
`;

const TextInput = styled.input<{ $bold?: boolean; $link?: boolean }>`
  ${fieldText}
  font-weight: ${(p) => (p.$bold ? 700 : 400)};
  ${(p) => p.$link && css`text-decoration: underline;`}
`;

const Lookup = styled.select`
  ${fieldText}
  appearance: none;
`;

const FieldButton = styled.button`
  width: 16px;
  display: grid;
  place-items: center;
  background: #f0f0f0;
  border-left: 1px solid ${color.fieldLine};
`;

const TypingCaret = styled.span`
  width: 1px;
  margin: 2px 0 3px 3px;
  background: #000000;
`;

const MemoBox = styled.div<{ $h: number }>`
  ${box}
  flex: 1;
  min-height: ${(p) => p.$h}px;
  display: flex;
`;

const MemoText = styled.textarea`
  flex: 1;
  padding: 2px 3px;
  border: 0;
  outline: 0;
  resize: none;
  overflow: hidden;
  background: transparent;
`;

const MemoScroll = styled.div`
  width: 17px;
  display: flex;
  flex-direction: column;
  justify-content: space-between;
  background: #ebebeb;
`;

const LogoBox = styled.div`
  ${box}
  height: 136px;
  display: grid;
  place-items: center;
`;

const docTabs: { icon: IconName; label: string }[] = [
  { icon: 'person', label: 'Customers' },
  { icon: 'invoice', label: 'Invoices' },
  { icon: 'quote', label: 'Quote' },
  { icon: 'dashboard', label: 'Main dashboard' },
  { icon: 'transJob', label: 'Translation jobs' },
  { icon: 'briefcase', label: 'Contractors' },
];

const pageTabs: { icon: IconName; label: string }[] = [
  { icon: 'info', label: 'Main data' },
  { icon: 'gearLight', label: 'Main customer settings' },
  { icon: 'contactPerson', label: 'Contacts [3]' },
  { icon: 'relations', label: 'Relations' },
  { icon: 'tag', label: 'Default rates' },
  { icon: 'file', label: 'Files' },
  { icon: 'bb', label: 'ProZ.com Blue Board' },
  { icon: 'quote', label: 'Quotes' },
  { icon: 'transJob', label: 'Translation jobs' },
  { icon: 'project', label: 'Translation projects' },
  { icon: 'invoice', label: 'Invoices' },
  { icon: 'payments', label: 'Payments' },
  { icon: 'creditNotes', label: 'Credit notes' },
  { icon: 'audit', label: 'Audit trail [20]' },
];

/* ---------- status bar ---------- */

const StatusBar = styled.footer`
  height: 23px;
  padding: 1px 0 0 6px;
  display: flex;
  align-items: center;
  border-top: 1px solid ${color.line};
`;

const StatusText = styled.span`
  margin-right: 16px;
  white-space: nowrap;
`;

const StatusButtons = styled.div`
  margin-left: auto;
  display: flex;
  align-items: center;
  gap: 14px;
`;

const StatusButton = styled.button<{ $dim?: boolean }>`
  display: flex;
  align-items: center;
  gap: 5px;
  white-space: nowrap;
  ${(p) => p.$dim && css`color: ${color.muted};`}
`;

const Grip = styled.span`
  align-self: flex-end;
  padding: 0 1px 1px 2px;
`;

/* ---------- form parts ---------- */

type FieldProps = {
  id: string;
  label: string;
  value?: string;
  kind?: 'text' | 'date' | 'lookup' | 'link';
  bold?: boolean;
  focused?: boolean;
};

const Field = ({ id, label, value = '', kind = 'text', bold, focused }: FieldProps) => (
  <FieldBlock>
    <FieldLabel htmlFor={id}>{label}</FieldLabel>
    <FieldBox>
      {focused && <TypingCaret />}
      {kind === 'lookup'
        ? <Lookup id={id} defaultValue=""><option value="" /></Lookup>
        : <TextInput id={id} defaultValue={value} $bold={bold} $link={kind === 'link'} />}
      {kind === 'lookup' && (
        <FieldButton type="button" aria-label={`Clear ${label}`}>
          <Glyph $w={9} $h={8} viewBox="0 0 9 8"><path d="m1 .5 7 7M8 .5l-7 7" stroke="#6a6a6a" strokeWidth="2" /></Glyph>
        </FieldButton>
      )}
      {(kind === 'lookup' || kind === 'date') && (
        <FieldButton type="button" aria-label={`Open ${label}`}>
          <Glyph $w={7} $h={4} viewBox="0 0 7 4"><path d="M0 0h7L3.500 4z" fill="#555" /></Glyph>
        </FieldButton>
      )}
      {kind === 'link' && (
        <FieldButton type="button" aria-label="Open web-address">
          <Glyph $w={4} $h={7} viewBox="0 0 4 7"><path d="M0 0v7l4-3.500z" fill="#555" /></Glyph>
        </FieldButton>
      )}
    </FieldBox>
  </FieldBlock>
);

const Memo = ({ id, value, height, name }: { id: string; value: string; height: number; name?: string }) => (
  <MemoBox $h={height}>
    <MemoText id={id} defaultValue={value} aria-label={name} rows={2} />
    <MemoScroll>
      <ScrollEnd type="button" aria-label="Scroll up"><Chevron up stroke="#bdbdbd" /></ScrollEnd>
      <ScrollEnd type="button" aria-label="Scroll down"><Chevron stroke="#bdbdbd" /></ScrollEnd>
    </MemoScroll>
  </MemoBox>
);

const Header = ({ icon, title }: { icon: IconName; title: string }) => (
  <GroupHeader type="button">
    <Chevron up />
    <GroupTitle><Icon name={icon} />{title}</GroupTitle>
  </GroupHeader>
);

const CompanyLogo = () => (
  <svg width="227" height="70" viewBox="0 0 227 70" role="img" aria-label="generic logo company">
    <circle cx="29" cy="35" r="28" fill="url(#gLogo)" />
    <circle cx="36.500" cy="43" r="17.500" fill="#ededed" />
    <g fill="#6a6a6a" fontFamily="DejaVu Sans, sans-serif">
      <text x="62" y="26" fontSize="16">generic logo</text>
      <text x="61" y="54" fontSize="35">company</text>
    </g>
  </svg>
);

const quickIcons: IconName[] = ['gear', 'mail', 'calendar', 'person', 'transJob', 'invoice', 'project', 'userBadge', 'redo', 'save', 'saveClose', 'undo'];

export default function App() {
  const [section, setSection] = useState('Reference data');
  const [node, setNode] = useState('Customers');

  return (
    <Frame>
      <GlobalStyle />
      <IconDefs />
      <Window>
        <TitleBar>
          <QuickAccess>
            <QuickButton aria-label="BaccS"><Icon name="app" /></QuickButton>
            <QuickButton $wide aria-label="Favorites"><Icon name="star" /><Caret fill="#fff" /></QuickButton>
            {quickIcons.map((name) => (
              <QuickButton key={name} aria-label={name}><Icon name={name} /></QuickButton>
            ))}
            <QuickButton aria-label="Customize toolbar">
              <Glyph $w={16} $h={8} viewBox="0 0 16 8"><path d="M6 1h5" stroke="#fff" strokeWidth="1.500" /><path d="M6 3.500h5L8.500 6.500z" fill="#fff" /></Glyph>
            </QuickButton>
          </QuickAccess>
          <WindowTitle>Splash words - Customer - BaccS. Version 4.9.1. Licensed to MB "Galerita". Licensed until 22.07.2021. Local mode.</WindowTitle>
          <WindowControls>
            <WindowButton aria-label="Ribbon display options">
              <Glyph $w={13} $h={11} viewBox="0 0 13 11"><path d="M.5.5h12v10H.5zM.5 2.500h12M6.500 10V4.500M4 6.500l2.500-2.500L9 6.500" fill="none" stroke="#cfe0ee" /></Glyph>
            </WindowButton>
            <WindowButton aria-label="Minimize">
              <Glyph $w={10} $h={10} viewBox="0 0 10 10"><path d="M0 6.500h10" stroke="#cfe0ee" /></Glyph>
            </WindowButton>
            <WindowButton aria-label="Maximize">
              <Glyph $w={10} $h={10} viewBox="0 0 10 10"><path d="M.5.5h9v9h-9z" fill="none" stroke="#cfe0ee" /></Glyph>
            </WindowButton>
            <WindowButton aria-label="Close window">
              <Glyph $w={10} $h={10} viewBox="0 0 10 10"><path d="m0 0 10 10M10 0 0 10" stroke="#cfe0ee" /></Glyph>
            </WindowButton>
          </WindowControls>
        </TitleBar>

        <RibbonTabs>
          <AppMenu aria-label="Application menu"><Icon name="appMenu" /><Caret fill="#fff" /></AppMenu>
          <RibbonTab $active>Home</RibbonTab>
          <RibbonTab>View</RibbonTab>
          <RibbonTab>Tools</RibbonTab>
          <RibbonTab>Support</RibbonTab>
        </RibbonTabs>

        <Ribbon>
          {ribbon.map((group) => (
            <RibbonGroup key={group.title} $w={group.w}>
              <RibbonItems $pad={group.pad}>
                {group.items.map((item) => (
                  <RibbonButton key={item.icon} $w={item.w} disabled={item.off}>
                    <Icon name={item.icon} size={32} />
                    <ButtonText>
                      {item.lines.map((line, i) => (
                        <TextLine key={line}>
                          {line}
                          {item.menu === 'inline' && i === item.lines.length - 1 && <Caret />}
                        </TextLine>
                      ))}
                      {item.menu === 'below' && <TextLine><Caret /></TextLine>}
                    </ButtonText>
                  </RibbonButton>
                ))}
              </RibbonItems>
              <RibbonCaption>{group.title}</RibbonCaption>
            </RibbonGroup>
          ))}
          <CollapseRibbon aria-label="Collapse the ribbon">
            <Glyph $w={12} $h={10} viewBox="0 0 12 10">
              <path d="m1 6 5-5 5 5-1.500 2L6 4.500 2.500 8zM3.500 8.500 6 6l2.500 2.500" fill="#fff" stroke="#777" />
            </Glyph>
          </CollapseRibbon>
        </Ribbon>

        <Workspace>
          <Sidebar>
            <SidebarHeader>
              <SidebarTitle>{section}</SidebarTitle>
              <button aria-label="Collapse navigation">
                <Glyph $w={7} $h={10} viewBox="0 0 7 10"><path d="M6 1 1.500 5 6 9" fill="none" stroke="#555" strokeWidth="2" /></Glyph>
              </button>
            </SidebarHeader>
            <TreeArea>
              <Tree>
                {tree.map((row) => (
                  <li key={row.label}>
                    <TreeRow onClick={() => setNode(row.label)}>
                      <Expander>
                        {row.children && (
                          <Glyph $w={4} $h={8} viewBox="0 0 4 8"><path d="M0 0v8l4-4z" fill="#6a6a6a" /></Glyph>
                        )}
                      </Expander>
                      <Icon name={row.icon} />
                      <TreeLabel $selected={row.label === node}>{row.label}</TreeLabel>
                    </TreeRow>
                  </li>
                ))}
              </Tree>
              <ScrollTrack>
                <ScrollEnd aria-label="Scroll up"><Chevron up /></ScrollEnd>
                <ScrollThumb />
                <ScrollEnd aria-label="Scroll down"><Chevron /></ScrollEnd>
              </ScrollTrack>
            </TreeArea>
            <Splitter>
              <Glyph $w={22} $h={2} viewBox="0 0 22 2"><path d="M0 1h22" stroke="#555" strokeWidth="2" strokeDasharray="2 2" /></Glyph>
            </Splitter>
            <nav>
              {navItems.map((item) => (
                <NavItem key={item.label} $active={item.label === section} onClick={() => setSection(item.label)}>
                  <Icon name={item.icon} />{item.label}
                </NavItem>
              ))}
            </nav>
            <SidebarFooter>
              <button aria-label="More sections">
                <Glyph $w={20} $h={4} viewBox="0 0 20 4"><g fill="#555"><circle cx="2" cy="2" r="2" /><circle cx="10" cy="2" r="2" /><circle cx="18" cy="2" r="2" /></g></Glyph>
              </button>
            </SidebarFooter>
          </Sidebar>

          <Content>
            <DocTabs>
              {docTabs.map((tab) => (
                <DocTab key={tab.label}><Icon name={tab.icon} />{tab.label}</DocTab>
              ))}
              <DocTab $active>
                <Icon name="person" />Splash words - Customer
                <DocTabTools>
                  <Glyph $w={8} $h={7} viewBox="0 0 8 7"><path d="M0 3.500h3M2.500 0v7" stroke="#fff" /><path d="M3 2h4.500v3H3" fill="none" stroke="#fff" /><path d="M3 4h5v1.500H3z" fill="#fff" /></Glyph>
                  <Glyph $w={9} $h={9} viewBox="0 0 9 9"><path d="m1 1 7 7M8 1 1 8" stroke="#fff" strokeWidth="2" /></Glyph>
                </DocTabTools>
              </DocTab>
              <DocMenu aria-label="Open documents">
                <Glyph $w={7} $h={4} viewBox="0 0 7 4"><path d="M0 0h7L3.500 4z" fill="#222" /></Glyph>
              </DocMenu>
            </DocTabs>

            <Page>
              <PageTabs>
                {pageTabs.map((tab, i) => (
                  <PageTab key={tab.label} $active={i === 0}><Icon name={tab.icon} />{tab.label}</PageTab>
                ))}
              </PageTabs>
              <PagePanel onSubmit={(e) => e.preventDefault()}>
                <GroupBox>
                  <Header icon="info" title="Main data" />
                  <MainBody>
                    <FieldBlock>
                      <FieldLabel as="span">Logo:</FieldLabel>
                      <LogoBox><CompanyLogo /></LogoBox>
                    </FieldBlock>
                    <ThreeColumns>
                      <Field id="name" label="Name:*" value="Splash words" bold />
                      <Field id="category" label="Category:" kind="lookup" />
                      <Field id="parent" label="Parent customer:" kind="lookup" />
                      <Field id="local1" label="Name localized 1:" />
                      <Field id="local2" label="Name localized 2:" />
                      <Field id="local3" label="Name localized 3:" />
                      <Field id="short" label="Short name:" value="Splash" />
                      <Field id="custCode" label="Customer code:" />
                      <Field id="supCode" label="Supplier code:" />
                      <Field id="firstContact" label="Date of first contact:" value="27.04.2017" kind="date" />
                      <Field id="phone" label="Phone:" />
                      <Field id="fax" label="Fax:" />
                    </ThreeColumns>
                  </MainBody>
                </GroupBox>

                <GroupBox>
                  <Header icon="house3d" title="Address" />
                  <GroupBody>
                    <ThreeColumns>
                      <Field id="street" label="Street:" focused />
                      <Field id="house" label="House:" />
                      <Field id="state" label="State:" />
                      <Field id="zip" label="Zip:" />
                      <Field id="city" label="City:" />
                      <Field id="country" label="Country:" kind="lookup" />
                    </ThreeColumns>
                    <FieldBlock>
                      <FieldLabel htmlFor="fullAddress" $tall>Full address:</FieldLabel>
                      <Memo id="fullAddress" value="Address in Brazil" height={94} />
                    </FieldBlock>
                  </GroupBody>
                </GroupBox>

                <GroupBox>
                  <Header icon="globe" title="Web" />
                  <GroupBody>
                    <ThreeColumns>
                      <Field id="web" label="Web-address:" value="www.Splash.com" kind="link" />
                      <Field id="login" label="Web-portal login:" value="login" />
                      <Field id="password" label="Web-portal password:" value="password" />
                    </ThreeColumns>
                  </GroupBody>
                </GroupBox>

                <GroupBox $grow>
                  <Header icon="note" title="Comments" />
                  <CommentsBody>
                    <Memo id="comments" value="Important notes" height={60} name="Comments" />
                  </CommentsBody>
                </GroupBox>
              </PagePanel>
            </Page>
          </Content>
        </Workspace>

        <StatusBar>
          <StatusText>Database: C:\Users\EugeneK\Documents\VSProjects\BaccS_XAF\BaccS_XAF.Win\bin\Debug\database</StatusText>
          <StatusText>User: Admin</StatusText>
          <StatusButtons>
            <StatusButton><Icon name="wiwo" />Write WIWO</StatusButton>
            <StatusButton><Icon name="bb" />Leave feedback on BB<Caret /></StatusButton>
            <StatusButton><Icon name="idea" />Submit idea/bug</StatusButton>
            <StatusButton $dim><Icon name="bell" />0</StatusButton>
            <Grip>
              <Glyph $w={8} $h={8} viewBox="0 0 8 8"><path d="M6 0h2v2H6zM3 3h2v2H3zM6 3h2v2H6zM0 6h2v2H0zM3 6h2v2H3zM6 6h2v2H6z" fill="#555" /></Glyph>
            </Grip>
          </StatusButtons>
        </StatusBar>
      </Window>
    </Frame>
  );
}
